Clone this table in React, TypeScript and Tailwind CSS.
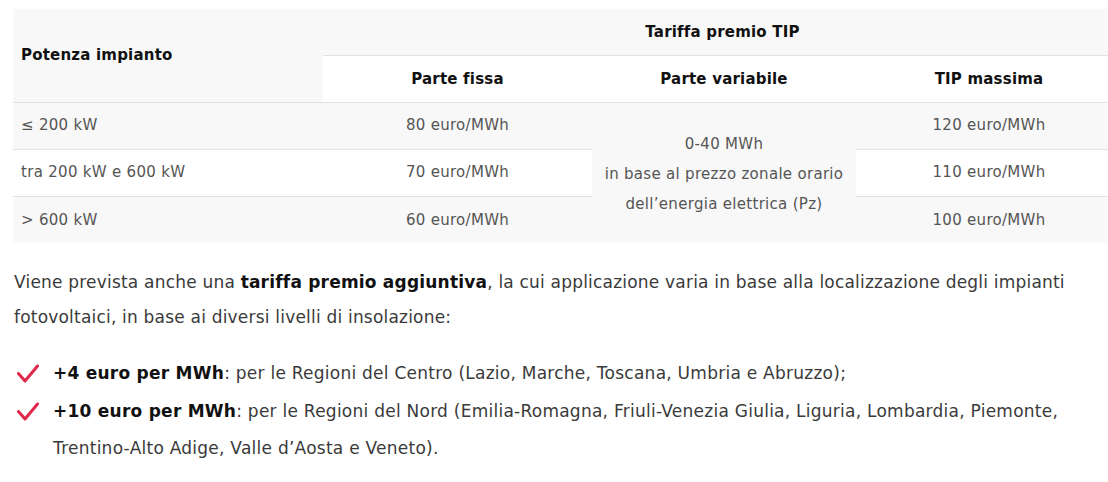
const rows = [
  { power: "≤ 200 kW", fixed: "80 euro/MWh", max: "120 euro/MWh" },
  { power: "tra 200 kW e 600 kW", fixed: "70 euro/MWh", max: "110 euro/MWh" },
  { power: "> 600 kW", fixed: "60 euro/MWh", max: "100 euro/MWh" },
];

function Check() {
  return (
    <svg viewBox="0 0 22 20" className="mt-[9px] h-[20px] w-[22px] shrink-0" aria-hidden>
      <path
        d="M1.5 9.5 L8 17 L20.5 2"
        fill="none"
        stroke="#e0284b"
        strokeWidth="3"
        strokeLinecap="round"
        strokeLinejoin="round"
      />
    </svg>
  );
}

export default function App() {
  return (
    <div className="w-[1108px] overflow-hidden bg-white font-['DejaVu_Sans',sans-serif] text-[#3a3a3a]">
      <div className="pl-[13px] pt-[9px]">
        <table className="w-[1109px] table-fixed border-collapse text-[15px]">
          <colgroup>
            <col className="w-[310px]" />
            <col className="w-[269px]" />
            <col className="w-[264px]" />
            <col className="w-[266px]" />
          </colgroup>
          <thead className="font-bold tracking-[0.2px] text-[#111]">
            <tr className="h-[46px] bg-[#f8f8f8]">
              <th rowSpan={2} className="border-b border-[#e2e2e2] px-2 text-left align-middle">
                Potenza impianto
              </th>
              <th colSpan={3} className="text-center align-middle">
                Tariffa premio TIP
              </th>
            </tr>
            <tr className="h-[47px] border-t border-b border-[#e2e2e2] bg-white">
              <th className="pt-[2px] text-center">Parte fissa</th>
              <th className="pt-[2px] text-center">Parte variabile</th>
              <th className="pt-[2px] text-center">TIP massima</th>
            </tr>
          </thead>
          <tbody className="tracking-[0.3px] text-[#555]">
            {rows.map((row, i) => (
              <tr
                key={row.power}
                className={`h-[47px] ${i > 0 ? "border-t border-[#e2e2e2]" : ""} ${i === 1 ? "bg-white" : "bg-[#f8f8f8]"}`}
              >
                <td className="px-2 text-left">{row.power}</td>
                <td className="text-center">{row.fixed}</td>
                {i === 0 && (
                  <td rowSpan={3} className="bg-[#f8f8f8] pt-[2px] text-center align-middle leading-[30px]">
                    0-40 MWh
                    <br />
                    in base al prezzo zonale orario
                    <br />
                    dell’energia elettrica (Pz)
                  </td>
                )}
                <td className="text-center">{row.max}</td>
              </tr>
            ))}
          </tbody>
        </table>
      </div>

      <p className="mt-[22px] w-[1090px] pl-[14px] text-[17px] leading-[35px] tracking-[0.2px]">
        Viene prevista anche una <strong className="font-bold text-[#111]">tariffa premio aggiuntiva</strong>, la cui
        applicazione varia in base alla localizzazione degli impianti fotovoltaici, in base ai diversi livelli di
        insolazione:
      </p>

      <ul className="mt-[20px] flex w-[1090px] flex-col pl-[17px] text-[17px] leading-[37.5px] tracking-[0.25px]">
        <li className="flex gap-[14px]">
          <Check />
          <span>
            <strong className="font-bold text-[#111]">+4 euro per MWh</strong>: per le Regioni del Centro (Lazio, Marche,
            Toscana, Umbria e Abruzzo);
          </span>
        </li>
        <li className="flex gap-[14px]">
          <Check />
          <span>
            <strong className="font-bold text-[#111]">+10 euro per MWh</strong>: per le Regioni del Nord
            (Emilia-Romagna, Friuli-Venezia Giulia, Liguria, Lombardia, Piemonte, Trentino-Alto Adige, Valle d’Aosta e
            Veneto).
          </span>
        </li>
      </ul>
    </div>
  );
}
